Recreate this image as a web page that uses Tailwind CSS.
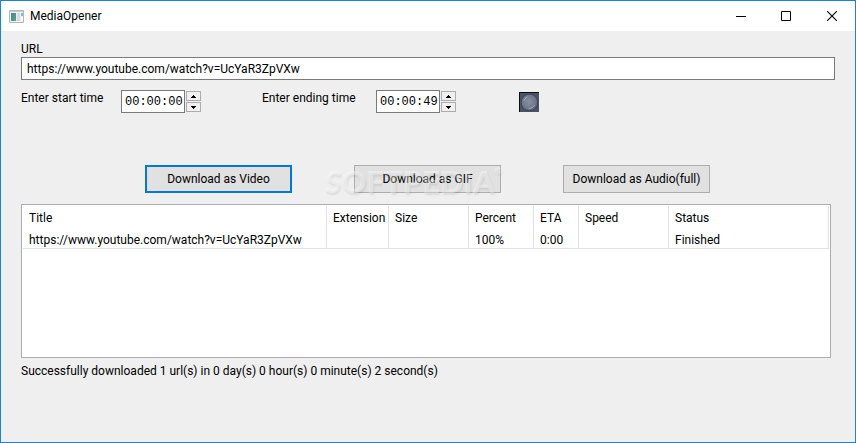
<!DOCTYPE html>
<html lang="en">
<head>
    <meta charset="utf-8">
    <meta name="viewport" content="width=device-width, initial-scale=1">
    <title>MediaOpener</title>
    <script src="https://cdn.jsdelivr.net/npm/@tailwindcss/browser@4"></script>
</head>
<body class="min-h-screen flex flex-col border border-[#1883d7] bg-[#efefef] text-black text-[12px] leading-4 font-[Roboto,'Open_Sans',sans-serif]">
    <header class="flex items-center h-[30px] bg-white">
        <svg class="ml-2 mr-1.5 w-[15px] h-[13px]" viewBox="0 0 15 13" aria-hidden="true">
            <defs>
                <linearGradient id="pane" x1="0" y1="0" x2="1" y2="1">
                    <stop offset="0" stop-color="#4f7fa5" />
                    <stop offset="1" stop-color="#52a878" />
                </linearGradient>
            </defs>
            <path fill="#eef0f2" stroke="#b4b8bd" d="M.5.5h14v12H.5z" />
            <path fill="#c5cad0" d="M1 1h13v1H1z" />
            <path fill="url(#pane)" d="M2 3h5v8H2z" />
            <path fill="#d8dadd" d="M8 3h3v8H8z" />
            <path fill="#8db5d2" d="M12 3h2v3h-2z" />
            <path fill="#fff" d="M12 7h2v4h-2z" />
        </svg>
        <h1>MediaOpener</h1>
        <div class="ml-auto flex h-full">
            <button class="w-11 flex items-center justify-center" aria-label="Minimize">
                <svg class="w-[10px] h-[10px]" viewBox="0 0 10 10"><path fill="#000" d="M0 5h10v1H0z" /></svg>
            </button>
            <button class="w-[46px] flex items-center justify-center" aria-label="Maximize">
                <svg class="w-[10px] h-[10px]" viewBox="0 0 10 10"><path fill="none" stroke="#000" d="M.5.5h9v9h-9z" /></svg>
            </button>
            <button class="w-[46px] flex items-center justify-center" aria-label="Close">
                <svg class="w-[10px] h-[10px]" viewBox="0 0 10 10"><path fill="none" stroke="#000" stroke-width="1.1" d="M0 0l10 10M10 0L0 10" /></svg>
            </button>
        </div>
    </header>

    <main class="flex-1 px-5 pt-[10px] pb-4">
        <label for="url" class="block">URL</label>
        <input id="url" type="text" value="https://www.youtube.com/watch?v=UcYaR3ZpVXw"
            class="block w-full h-[23px] px-[5px] border border-[#7a7a7a] bg-white outline-none">

        <div class="flex mt-[10px] h-[23px]">
            <label for="start" class="w-[100px] whitespace-nowrap">Enter start time</label>
            <input id="start" type="text" value="00:00:00"
                class="w-16 pl-[3px] border border-[#7a7a7a] bg-white font-['Liberation_Mono',monospace] outline-none">
            <div class="flex flex-col justify-center gap-px ml-px">
                <button class="w-[15px] h-[10px] flex items-center justify-center border border-[#acacac] bg-[#f0f0f0]" aria-label="Start time up">
                    <svg class="w-[5px] h-[3px]" viewBox="0 0 5 3"><path d="M2 0h1v1h1v1h1v1H0V2h1V1h1z" /></svg>
                </button>
                <button class="w-[15px] h-[10px] flex items-center justify-center border border-[#acacac] bg-[#f0f0f0]" aria-label="Start time down">
                    <svg class="w-[5px] h-[3px]" viewBox="0 0 5 3"><path d="M0 0h5v1H4v1H3v1H2V2H1V1H0z" /></svg>
                </button>
            </div>
            <label for="end" class="w-[114px] ml-[61px] whitespace-nowrap">Enter ending time</label>
            <input id="end" type="text" value="00:00:49"
                class="w-16 pl-[3px] border border-[#7a7a7a] bg-white font-['Liberation_Mono',monospace] outline-none">
            <div class="flex flex-col justify-center gap-px ml-px">
                <button class="w-[15px] h-[10px] flex items-center justify-center border border-[#acacac] bg-[#f0f0f0]" aria-label="Ending time up">
                    <svg class="w-[5px] h-[3px]" viewBox="0 0 5 3"><path d="M2 0h1v1h1v1h1v1H0V2h1V1h1z" /></svg>
                </button>
                <button class="w-[15px] h-[10px] flex items-center justify-center border border-[#acacac] bg-[#f0f0f0]" aria-label="Ending time down">
                    <svg class="w-[5px] h-[3px]" viewBox="0 0 5 3"><path d="M0 0h5v1H4v1H3v1H2V2H1V1H0z" /></svg>
                </button>
            </div>
            <!-- activity light -->
            <svg class="self-center ml-[63px] w-5 h-5" viewBox="0 0 20 20" aria-hidden="true">
                <defs>
                    <radialGradient id="lamp" cx=".45" cy=".45" r=".6">
                        <stop offset="0" stop-color="#8790a2" />
                        <stop offset=".7" stop-color="#6f788b" />
                        <stop offset="1" stop-color="#4e5668" />
                    </radialGradient>
                </defs>
                <path fill="#4b5264" d="M0 0h20v20H0z" />
                <path fill="#0b0d16" d="M0 0h20v1H1v19H0z" />
                <circle cx="10.5" cy="10.5" r="8.500" fill="#343a4a" />
                <circle cx="10.5" cy="10.5" r="8" fill="url(#lamp)" />
                <path fill="none" stroke="#a3abba" stroke-linecap="round" d="M5 8.500a6 6 0 0 1 3-3.500M10 16.500a6 6 0 0 0 5.500-3" />
            </svg>
        </div>

        <div class="relative flex gap-[62px] mt-[52px] pl-[124px]">
            <button class="w-[147px] h-7 border-2 border-[#0078d7] bg-[#e1e1e1]">Download as Video</button>
            <button class="w-[147px] h-7 border border-[#adadad] bg-[#e1e1e1]">Download as GIF</button>
            <button class="w-[147px] h-7 border border-[#adadad] bg-[#e1e1e1]">Download as Audio(full)</button>
            <div class="absolute left-[304px] top-0 flex items-start pointer-events-none select-none text-white/40 font-['Lato',sans-serif] font-black text-[31px] leading-8 [text-shadow:1px_2px_2px_rgb(0_0_0/0.08)]">
                <span class="italic">S</span>OFTPEDIA<span class="text-[9px] leading-3">®</span>
            </div>
        </div>

        <div class="mt-[11px] mr-1 h-[154px] p-px border border-[#abadb3] bg-white">
            <table class="w-full table-fixed border-separate border-spacing-0 text-left border-r border-b border-[#e2e2e2]">
                <colgroup>
                    <col class="w-[303px]">
                    <col class="w-[62px]">
                    <col class="w-[80px]">
                    <col class="w-[65px]">
                    <col class="w-[45px]">
                    <col class="w-[90px]">
                    <col>
                </colgroup>
                <thead>
                    <tr class="h-6 *:p-0 *:pl-1.5 *:font-normal *:not-first:border-l *:border-[#e2e2e2]">
                        <th>Title</th>
                        <th>Extension</th>
                        <th>Size</th>
                        <th>Percent</th>
                        <th>ETA</th>
                        <th>Speed</th>
                        <th>Status</th>
                    </tr>
                </thead>
                <tbody>
                    <tr class="h-[18px] *:p-0 *:pt-0.5 *:pl-1.5 *:not-first:border-l *:border-[#e2e2e2]">
                        <td>https://www.youtube.com/watch?v=UcYaR3ZpVXw</td>
                        <td></td>
                        <td></td>
                        <td>100%</td>
                        <td>0:00</td>
                        <td></td>
                        <td>Finished</td>
                    </tr>
                </tbody>
            </table>
        </div>
        <p class="mt-[5px]">Successfully downloaded 1 url(s) in 0 day(s) 0 hour(s) 0 minute(s) 2 second(s)</p>
    </main>
</body>
</html>
